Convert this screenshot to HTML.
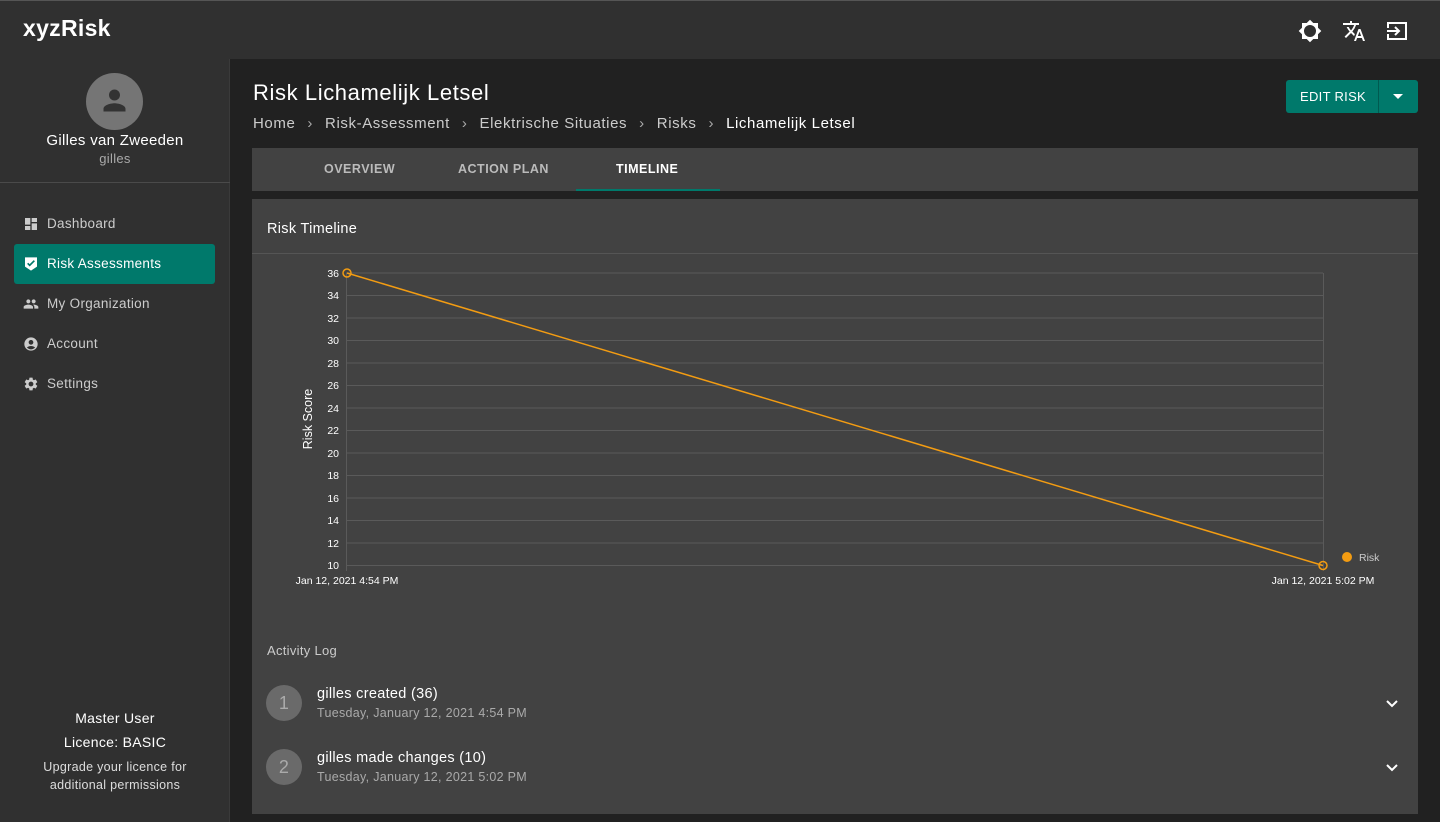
<!DOCTYPE html>
<html><head><meta charset="utf-8"><style>
*{box-sizing:border-box;margin:0;padding:0}
body{width:1440px;height:822px;overflow:hidden;background:#212121;font-family:"Liberation Sans",sans-serif;color:#fff;position:relative;letter-spacing:.3px}
svg{letter-spacing:0}
.top{position:absolute;left:0;top:0;width:1440px;height:59px;background:#303030;border-top:1px solid #555}
.logo{position:absolute;left:23px;top:14px;font-size:23px;font-weight:bold;letter-spacing:0.3px}
.side{position:absolute;left:0;top:59px;width:230px;height:763px;background:#303030;border-right:1px solid #3a3a3a}
.avatar{position:absolute;left:86px;top:14px;width:57px;height:57px;border-radius:50%;background:#757575}
.name{position:absolute;left:0;width:230px;text-align:center;top:73px;font-size:15px}
.user{position:absolute;left:0;width:230px;text-align:center;top:92px;font-size:13px;color:#aaa}
.sep{position:absolute;left:0;top:123px;width:230px;height:1px;background:#4a4a4a}
.nav{position:absolute;left:14px;width:201px;height:40px;border-radius:3px;font-size:13.5px;color:#ccc;line-height:40px;padding-left:33px}
.nav svg{position:absolute;left:9px;top:12px}
.nav.act{background:#00796b;color:#fff}
.foot{position:absolute;left:0;width:230px;text-align:center}
.title{position:absolute;left:253px;top:80px;font-size:22px;letter-spacing:.6px}
.crumb{position:absolute;left:253px;top:115px;font-size:15px;color:#ccc;letter-spacing:.6px}
.crumb b{font-weight:normal;color:#aaa;margin:0 12px}
.btn{position:absolute;left:1286px;top:80px;width:132px;height:33px;background:#00796b;border-radius:3px}
.tabs{position:absolute;left:252px;top:148px;width:1166px;height:43px;background:#424242}
.tab{position:absolute;top:14px;font-size:12.5px;font-weight:bold;color:#bbb;letter-spacing:.5px}
.card{position:absolute;left:252px;top:199px;width:1166px;height:615px;background:#424242}
.num{position:absolute;left:14px;width:36px;height:36px;border-radius:50%;background:#6a6a6a;color:#aaa;font-size:18px;text-align:center;line-height:36px}
.li{position:absolute;left:65px;font-size:14.5px}
.li small{display:block;font-size:12.5px;color:#aaa;margin-top:4px}
</style></head><body>
<div class="top"><div class="logo">xyzRisk</div>
<svg style="position:absolute;left:1298px;top:18px" width="24" height="24" viewBox="0 0 24 24"><path fill="#fff" fill-rule="evenodd" d="M20 8.69V4h-4.69L12 .69 8.69 4H4v4.69L.69 12 4 15.31V20h4.69L12 23.31 15.31 20H20v-4.69L23.31 12 20 8.69zM12 18a6 6 0 1 1 0-12 6 6 0 1 1 0 12z"/></svg>
<svg style="position:absolute;left:1342px;top:18px" width="24" height="24" viewBox="0 0 24 24"><path fill="#fff" d="M12.87 15.07l-2.54-2.51.03-.03A17.52 17.52 0 0014.07 6H17V4h-7V2H8v2H1v2h11.17C11.5 7.92 10.44 9.75 9 11.35 8.07 10.32 7.3 9.19 6.69 8h-2c.73 1.63 1.73 3.17 2.98 4.56l-5.09 5.02L4 19l5-5 3.11 3.11.76-2.04zM18.5 10h-2L12 22h2l1.12-3h4.75L21 22h2l-4.5-12zm-2.62 7l1.62-4.33L19.12 17h-3.24z"/></svg>
<svg style="position:absolute;left:1385px;top:18px" width="24" height="24" viewBox="0 0 24 24"><path fill="none" stroke="#fff" stroke-width="2" d="M3 9V4h18v16H3v-5M2 12h12M10 8l4 4-4 4"/></svg>
</div>
<div class="side">
<div class="avatar"><svg style="position:absolute;left:12px;top:11px" width="33" height="33" viewBox="0 0 24 24"><path fill="#333" d="M12 12c2.21 0 4-1.79 4-4s-1.79-4-4-4-4 1.79-4 4 1.79 4 4 4zm0 2c-2.67 0-8 1.34-8 4v2h16v-2c0-2.66-5.33-4-8-4z"/></svg></div>
<div class="name">Gilles van Zweeden</div><div class="user">gilles</div><div class="sep"></div>
<div class="nav" style="top:145px"><svg width="16" height="16" viewBox="0 0 24 24"><path fill="#ccc" d="M3 13h8V3H3v10zm0 8h8v-6H3v6zm10 0h8V11h-8v10zm0-18v6h8V3h-8z"/></svg>Dashboard</div>
<div class="nav act" style="top:185px"><svg width="16" height="16" viewBox="0 0 24 24"><path fill="#fff" d="M3 2h18v14l-9 6-9-6z"/><path fill="none" stroke="#00796b" stroke-width="2.5" d="M7 11l3 3 7-7"/></svg>Risk Assessments</div>
<div class="nav" style="top:225px"><svg width="16" height="16" viewBox="0 0 24 24"><path fill="#ccc" d="M16 11c1.66 0 2.99-1.34 2.99-3S17.66 5 16 5c-1.66 0-3 1.34-3 3s1.34 3 3 3zm-8 0c1.66 0 2.99-1.34 2.99-3S9.66 5 8 5C6.34 5 5 6.34 5 8s1.34 3 3 3zm0 2c-2.33 0-7 1.17-7 3.5V19h14v-2.5c0-2.33-4.67-3.5-7-3.5zm8 0c-.29 0-.62.02-.97.05 1.16.84 1.97 1.97 1.97 3.45V19h6v-2.5c0-2.33-4.67-3.5-7-3.5z"/></svg>My Organization</div>
<div class="nav" style="top:265px"><svg width="16" height="16" viewBox="0 0 24 24"><path fill="#ccc" d="M12 2C6.48 2 2 6.48 2 12s4.48 10 10 10 10-4.48 10-10S17.52 2 12 2zm0 4c1.93 0 3.5 1.57 3.5 3.5S13.93 13 12 13s-3.5-1.57-3.5-3.5S10.07 6 12 6zm0 14c-2.03 0-4.43-.82-6.14-2.88C7.55 15.8 9.68 15 12 15s4.45.8 6.14 2.12C16.43 19.18 14.03 20 12 20z"/></svg>Account</div>
<div class="nav" style="top:305px"><svg width="16" height="16" viewBox="0 0 24 24"><path fill="#ccc" d="M19.14 12.94c.04-.3.06-.61.06-.94 0-.32-.02-.64-.07-.94l2.03-1.58a.49.49 0 00.12-.61l-1.92-3.32a.488.488 0 00-.59-.22l-2.39.96c-.5-.38-1.03-.7-1.62-.94l-.36-2.54a.484.484 0 00-.48-.41h-3.84c-.24 0-.43.17-.47.41l-.36 2.54c-.59.24-1.13.57-1.62.94l-2.39-.96c-.22-.08-.47 0-.59.22L2.74 8.87c-.12.21-.08.47.12.61l2.03 1.58c-.05.3-.09.63-.09.94s.02.64.07.94l-2.03 1.58a.49.49 0 00-.12.61l1.92 3.32c.12.22.37.29.59.22l2.39-.96c.5.38 1.03.7 1.62.94l.36 2.54c.05.24.24.41.48.41h3.84c.24 0 .44-.17.47-.41l.36-2.54c.59-.24 1.13-.56 1.62-.94l2.39.96c.22.08.47 0 .59-.22l1.92-3.32c.12-.22.07-.47-.12-.61l-2.01-1.58zM12 15.6c-1.98 0-3.6-1.62-3.6-3.6s1.62-3.6 3.6-3.6 3.6 1.62 3.6 3.6-1.62 3.6-3.6 3.6z"/></svg>Settings</div>
<div class="foot" style="top:651px;font-size:14px">Master User</div>
<div class="foot" style="top:675px;font-size:14px">Licence: BASIC</div>
<div class="foot" style="top:699px;font-size:12.5px;line-height:18px;color:#ddd">Upgrade your licence for<br>additional permissions</div>
</div>
<div class="title">Risk Lichamelijk Letsel</div>
<div class="crumb">Home<b>›</b>Risk-Assessment<b>›</b>Elektrische Situaties<b>›</b>Risks<b>›</b><span style="color:#fff">Lichamelijk Letsel</span></div>
<div class="btn"><span style="position:absolute;left:14px;top:9px;font-size:13px">EDIT RISK</span><div style="position:absolute;left:92px;top:0;width:1px;height:33px;background:#005a50"></div><svg style="position:absolute;left:107px;top:14px" width="10" height="6"><path d="M0 0h10L5 5z" fill="#fff"/></svg></div>
<div class="tabs"><span class="tab" style="left:72px">OVERVIEW</span><span class="tab" style="left:206px">ACTION PLAN</span><span class="tab" style="left:364px;color:#fff">TIMELINE</span><div style="position:absolute;left:324px;top:41px;width:144px;height:2px;background:#00796b"></div></div>
<div class="card">
<div style="position:absolute;left:15px;top:22px;font-size:14.5px">Risk Timeline</div>
<div style="position:absolute;left:0;top:54px;width:1166px;height:1px;background:#555"></div>
<svg style="position:absolute;left:0;top:0" width="1166" height="420">
<g stroke="#5a5a5a" stroke-width="1">
<line x1="94" y1="74" x2="1071" y2="74"/><line x1="94" y1="96.5" x2="1071" y2="96.5"/><line x1="94" y1="119" x2="1071" y2="119"/><line x1="94" y1="141.5" x2="1071" y2="141.5"/><line x1="94" y1="164" x2="1071" y2="164"/><line x1="94" y1="186.5" x2="1071" y2="186.5"/><line x1="94" y1="209" x2="1071" y2="209"/><line x1="94" y1="231.5" x2="1071" y2="231.5"/><line x1="94" y1="254" x2="1071" y2="254"/><line x1="94" y1="276.5" x2="1071" y2="276.5"/><line x1="94" y1="299" x2="1071" y2="299"/><line x1="94" y1="321.5" x2="1071" y2="321.5"/><line x1="94" y1="344" x2="1071" y2="344"/><line x1="94" y1="366.5" x2="1071" y2="366.5"/>
<line x1="94.5" y1="74" x2="94.5" y2="372"/><line x1="1071.5" y1="74" x2="1071.5" y2="372"/>
</g>
<g fill="#fff" font-size="10.5" text-anchor="end" font-family="Liberation Sans">
<text x="87" y="78">36</text><text x="87" y="100">34</text><text x="87" y="123">32</text><text x="87" y="145">30</text><text x="87" y="168">28</text><text x="87" y="190">26</text><text x="87" y="213">24</text><text x="87" y="235">22</text><text x="87" y="258">20</text><text x="87" y="280">18</text><text x="87" y="303">16</text><text x="87" y="325">14</text><text x="87" y="348">12</text><text x="87" y="370">10</text>
</g>
<text x="60" y="220" fill="#fff" font-size="12.5" text-anchor="middle" transform="rotate(-90 60 220)" font-family="Liberation Sans">Risk Score</text>
<text x="95" y="385" fill="#fff" font-size="10.5" text-anchor="middle" font-family="Liberation Sans">Jan 12, 2021 4:54 PM</text>
<text x="1071" y="385" fill="#fff" font-size="10.5" text-anchor="middle" font-family="Liberation Sans">Jan 12, 2021 5:02 PM</text>
<line x1="95" y1="74" x2="1071" y2="366.5" stroke="#f39c12" stroke-width="1.5"/>
<circle cx="95" cy="74" r="4" fill="none" stroke="#f39c12" stroke-width="1.5"/>
<circle cx="1071" cy="366.5" r="4" fill="none" stroke="#f39c12" stroke-width="1.5"/>
<circle cx="1095" cy="358" r="5" fill="#f39c12"/>
<text x="1107" y="362" fill="#ccc" font-size="10.5" font-family="Liberation Sans">Risk</text>
</svg>
<div style="position:absolute;left:15px;top:444px;font-size:13px;color:#ccc">Activity Log</div>
<div class="num" style="top:486px">1</div>
<div class="li" style="top:487px">gilles created (36)<small>Tuesday, January 12, 2021 4:54 PM</small></div>
<div class="num" style="top:550px">2</div>
<div class="li" style="top:551px">gilles made changes (10)<small>Tuesday, January 12, 2021 5:02 PM</small></div>
<svg style="position:absolute;left:1134px;top:501px" width="12" height="8"><path d="M1 1l5 5 5-5" stroke="#fff" stroke-width="2" fill="none"/></svg>
<svg style="position:absolute;left:1134px;top:565px" width="12" height="8"><path d="M1 1l5 5 5-5" stroke="#fff" stroke-width="2" fill="none"/></svg>
</div>
</body></html>
